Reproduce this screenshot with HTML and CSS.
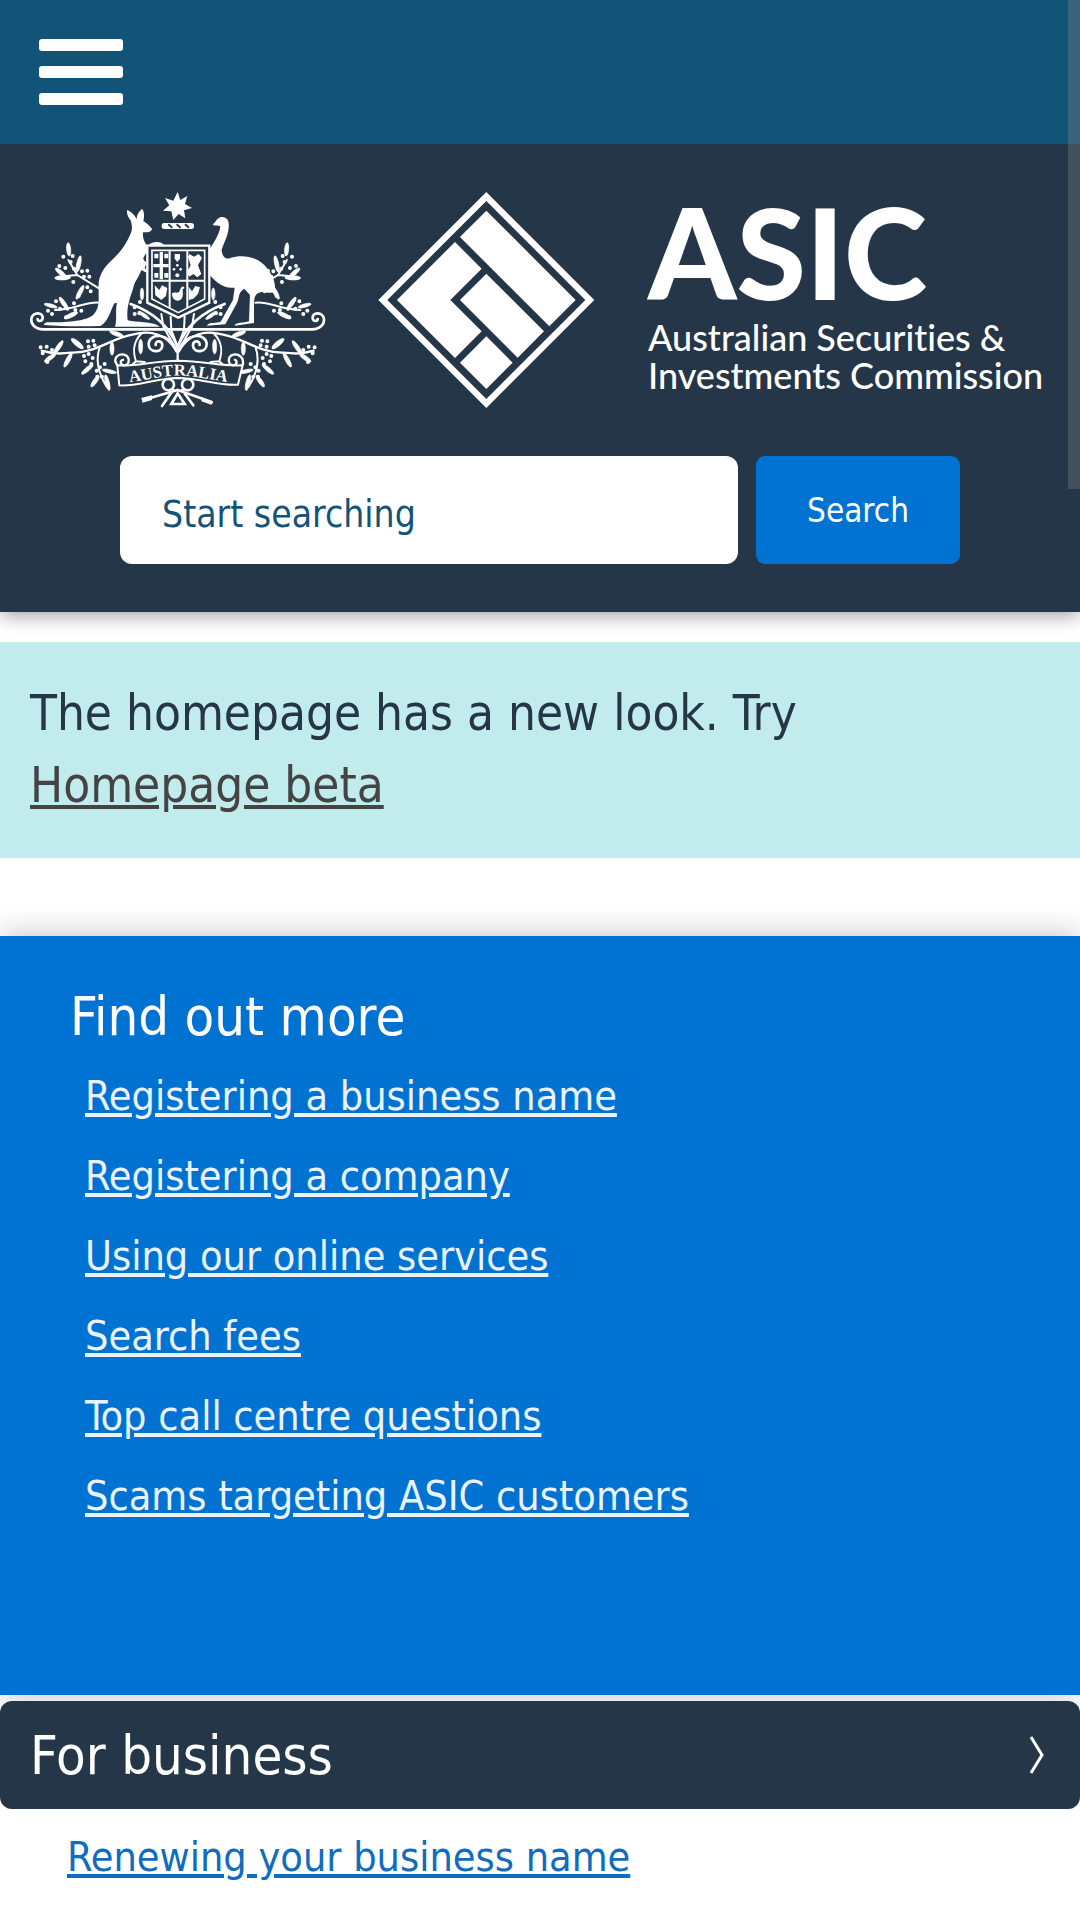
FILE: index.html
```html
<!DOCTYPE html>
<html lang="en">
<head>
    <meta charset="UTF-8">
    <meta name="viewport" content="width=device-width, initial-scale=1.0">
    <title>ASIC Home</title>
    <link rel="stylesheet" href="styles.css">
</head>
<body>

    <nav class="topbar">
        <button type="button" class="menu-button" aria-label="Menu">
            <span></span>
            <span></span>
            <span></span>
        </button>
    </nav>

    <header class="header">
        <a href="#" class="logo" aria-label="ASIC home">
            <svg viewBox="0 0 1020 216" fill="#fff">
                <defs>
                    <!-- one half of the wattle and scroll work, mirrored for the other side -->
                    <g id="half">
                        <g fill="none" stroke="#fff" stroke-width="6" stroke-linecap="round">
                            <path stroke-width="8" d="M533 508H130C105 508 92 492 94 477C97 455 130 455 128 475C126 486 112 485 113 477"/>
                            <path stroke-width="8" d="M533 560C510 505 470 460 392 432"/>
                            <path d="M300 428C260 422 225 450 165 450"/>
                            <path d="M298 386L232 345M232 345L205 300M232 345L175 350"/>
                            <path stroke-width="7" d="M530 575C500 520 450 510 400 523C330 535 290 580 215 578C180 582 160 582 125 572"/>
                            <path stroke-width="8" d="M528 570C505 515 450 520 446 550C444 578 485 582 487 557C487 540 466 540 467 555"/>
                            <path d="M300 560C285 600 295 640 320 680"/>
                            <path d="M425 520C395 550 400 580 408 604L392 618M408 604L434 606"/>
                            <path d="M484 462L490 500L530 570M512 470L514 510L533 560"/>
                        </g>
                        <g stroke="#fff" stroke-width="2">
                            <ellipse cx="206" cy="268" rx="6" ry="20" transform="rotate(-5 206 268)"/>
                            <ellipse cx="236" cy="312" rx="6" ry="25" transform="rotate(12 236 312)"/>
                            <ellipse cx="182" cy="338" rx="6" ry="20" transform="rotate(-50 182 338)"/>
                            <ellipse cx="186" cy="354" rx="22" ry="6"/>
                            <ellipse cx="240" cy="397" rx="6" ry="23" transform="rotate(28 240 397)"/>
                            <ellipse cx="152" cy="437" rx="20" ry="5" transform="rotate(15 152 437)"/>
                            <ellipse cx="191" cy="430" rx="6" ry="22" transform="rotate(-35 191 430)"/>
                            <ellipse cx="213" cy="466" rx="22" ry="6" transform="rotate(-25 213 466)"/>
                            <ellipse cx="426" cy="402" rx="5" ry="18"/>
                            <ellipse cx="432" cy="466" rx="20" ry="5" transform="rotate(35 432 466)"/>
                            <ellipse cx="175" cy="562" rx="6" ry="24" transform="rotate(35 175 562)"/>
                            <ellipse cx="150" cy="594" rx="20" ry="6" transform="rotate(-35 150 594)"/>
                            <ellipse cx="232" cy="551" rx="23" ry="7" transform="rotate(40 232 551)"/>
                            <ellipse cx="204" cy="600" rx="6" ry="24" transform="rotate(28 204 600)"/>
                            <ellipse cx="336" cy="566" rx="6" ry="20"/>
                            <ellipse cx="350" cy="522" rx="22" ry="6" transform="rotate(20 350 522)"/>
                            <ellipse cx="422" cy="560" rx="6" ry="22"/>
                            <ellipse cx="262" cy="628" rx="22" ry="6" transform="rotate(-40 262 628)"/>
                            <ellipse cx="285" cy="664" rx="20" ry="6" transform="rotate(-55 285 664)"/>
                            <ellipse cx="322" cy="668" rx="6" ry="24" transform="rotate(-14 322 668)"/>
                            <ellipse cx="328" cy="634" rx="22" ry="5" transform="rotate(12 328 634)"/>
                        </g>
                        <!-- berries -->
                        <path fill="none" stroke="#fff" stroke-width="12" stroke-linecap="round" d="M190 290h0M218 288h0M212 306h0M178 318h0M196 324h0M222 326h0M206 352h0M220 366h0M246 334h0M262 332h0M252 350h0M268 350h0M236 408h0M262 382h0M272 394h0M144 452h0M168 424h0M180 446h0M156 462h0M202 446h0M222 430h0M198 472h0M226 450h0M244 452h0M404 442h0M420 426h0M404 462h0M418 460h0M122 562h0M140 560h0M128 580h0M156 570h0M142 606h0M264 544h0M280 542h0M266 560h0M284 556h0M252 588h0M266 582h0M278 594h0M256 604h0M274 612h0M290 632h0M300 622h0M306 650h0M292 650h0M314 612h0"/>
                    </g>
                </defs>

                <!-- coat of arms -->
                <g transform="translate(-30 -32) scale(.3333)">
                    <path d="M533 96L541 120L562 108L555 132L576 144L552 151L556 175L536 162L520 180L514 154L489 152L508 136L495 114L520 122Z"/>
                    <rect x="485" y="189" width="97" height="18" rx="8"/>
                    <path stroke="#243647" stroke-width="6" d="M505 193l12 10M530 193l12 10M555 193l12 10"/>
                    <use href="#half"/>
                    <use href="#half" transform="matrix(-1 0 0 1 1066 0)"/>
                    <!-- kangaroo -->
                    <path d="M381 150C395 155 406 168 410 178C410 165 418 152 427 147C434 158 433 172 430 183C441 189 448 198 456 206C455 217 440 217 429 217C427 235 434 247 441 257C455 244 484 241 492 256C475 265 453 263 442 273L432 290C427 297 432 302 440 307L434 325L448 333L436 337L424 330C418 350 405 363 401 379C397 400 377 435 383 481C410 489 455 482 480 500L345 500C352 478 345 455 351 429L343 430C330 455 327 482 302 498C250 499 190 500 132 495C130 486 143 486 165 487C216 486 266 481 282 462C301 440 295 414 296 390C291 340 322 313 345 291C370 267 386 238 395 212C397 201 395 190 392 181C385 174 380 162 381 150Z"/>
                    <!-- emu -->
                    <path d="M638 193C648 188 650 171 666 171C684 172 688 184 686 204C684 230 667 257 665 272C668 290 676 300 691 294C730 282 777 292 800 323C820 349 829 371 824 396C805 403 793 390 775 399C760 407 763 425 762 440L762 489L704 497C706 486 731 490 747 484L750 405L733 386C710 400 722 415 706 438L676 493L620 497C629 484 650 491 662 485L699 420L704 383C666 387 645 361 628 344L627 270C641 250 660 220 661 199C653 196 645 200 638 193Z"/>
                    <!-- shield -->
                    <path fill="#243647" stroke="#fff" stroke-width="7" d="M442 257H628V428L535 473L442 428Z"/>
                    <path fill="#243647" stroke="#fff" stroke-width="5" d="M456 271H614V417L535 458L456 417Z"/>
                    <path fill="none" stroke="#fff" stroke-width="6" d="M456 362H614M509 272V445M562 272V445"/>
                    <path fill="none" stroke="#fff" stroke-width="10" d="M484 276V358M460 317H506"/>
                    <path d="M463 281h12v14h-12zM493 281h12v14h-12zM463 339h12v14h-12zM493 339h12v14h-12zM524 282h16v14l-8 10l-8-10zM568 282l14 8l14-8l10 12l-12 22l10 26l-12 10l-12-10l-12 8l-8-12l12-22l-8-26z"/>
                    <circle cx="532" cy="316" r="4"/><circle cx="522" cy="328" r="4"/><circle cx="542" cy="328" r="4"/><circle cx="532" cy="346" r="6"/>
                    <path d="M464 376l14 14l8-14l16 8l-4 24l-14 12l-18-14zM516 400c10-6 20 4 24-10c4-12 10-14 14-6l-6 4c2 20 0 34-14 34s-18-12-18-22zM566 380l10 14l10-16l14 4l-6 20l-14 14l-14 4z"/>
                    <!-- bow under the scroll -->
                    <g fill="none" stroke="#fff" stroke-width="8" stroke-linecap="round">
                        <path d="M533 690L430 720M533 690L635 726M520 690L486 738M546 690L580 736"/>
                        <circle cx="505" cy="674" r="17"/>
                        <circle cx="563" cy="674" r="17"/>
                        <path d="M533 700L514 732H554Z"/>
                    </g>
                    <path d="M424 714l32-8v14l-28 8zM606 712l34 14l-6 8l-30-10z"/>
                    <path fill="none" stroke="#fff" stroke-width="7" d="M533 560V602"/>
                    <!-- scroll with the name -->
                    <path fill="#243647" stroke="#fff" stroke-width="6" d="M352 616C410 620 455 603 535 602C615 603 660 620 728 616L714 674C650 678 610 655 535 654C460 655 415 680 358 676Z"/>
                    <g fill="none" stroke="#fff" stroke-width="7">
                        <path d="M352 616C336 594 356 580 372 584C392 590 390 616 372 616C358 614 360 598 372 600"/>
                        <path d="M728 616C734 592 714 580 700 584C680 590 684 616 700 616C714 614 712 598 702 600"/>
                    </g>
                    <path id="scroll" fill="none" d="M360 670C430 664 480 647 535 647C590 647 640 662 710 670"/>
                    <text class="scroll-text" text-anchor="middle"><textPath href="#scroll" startOffset="50%">AUSTRALIA</textPath></text>
                </g>

                <!-- diamond -->
                <g transform="translate(330 -22) scale(.3333)">
                    <path fill-rule="evenodd" d="M379 66L703 390L379 714L55 390ZM379 93L82 390L379 687L676 390Z"/>
                    <path d="M379 122L647 390L568 469L300 201ZM285 216L365 296L271 390L365 484L285 564L111 390ZM379 311L552 484L473 563L300 390ZM379 499L458 578L379 657L300 578Z"/>
                </g>

                <text class="logo-name" x="618" y="108">ASIC</text>
                <text class="logo-text" x="618" y="159">Australian Securities &amp;</text>
                <text class="logo-text" x="618" y="197">Investments Commission</text>
            </svg>
        </a>

        <form class="search">
            <input type="text" id="search" name="search" placeholder="Start searching" aria-label="Start searching">
            <button type="submit">Search</button>
        </form>
    </header>

    <main>
        <p class="notice">The homepage has a new look. Try <br><a href="#">Homepage beta</a></p>

        <section class="find-out">
            <h2>Find out more</h2>
            <ul>
                <li><a href="#">Registering a business name</a></li>
                <li><a href="#">Registering a company</a></li>
                <li><a href="#">Using our online services</a></li>
                <li><a href="#">Search fees</a></li>
                <li><a href="#">Top call centre questions</a></li>
                <li><a href="#">Scams targeting ASIC customers</a></li>
            </ul>
        </section>

        <section class="business">
            <button type="button" class="panel-button">
                For business
                <svg viewBox="0 0 14 38" width="14" height="38" fill="none" stroke="#fff" stroke-width="3">
                    <path d="M1 1L12 19L1 37"/>
                </svg>
            </button>
            <ul>
                <li><a href="#">Renewing your business name</a></li>
            </ul>
        </section>
    </main>

    <div class="scroll-thumb"></div>

</body>
</html>
```
FILE: styles.css
```css
* {
    box-sizing: border-box;
}
body {
    position: relative;
    margin: 0;
    background-color: #fff;
    color: #243647;
    font-family: Tahoma, "DejaVu Sans Condensed", "DejaVu Sans", sans-serif;
    overflow-x: hidden;
}
ul {
    list-style: none;
    margin: 0;
    padding: 0;
}
button, input {
    font-family: inherit;
    border: none;
}
.topbar {
    position: relative;
    height: 144px;
    padding: 39px;
    background-color: #125478;
}
.menu-button {
    display: flex;
    flex-direction: column;
    gap: 15px;
    width: 84px;
    padding: 0;
    background: none;
    cursor: pointer;
}
.menu-button span {
    height: 12px;
    border-radius: 3px;
    background-color: #fff;
}
.header {
    padding: 48px 30px;
    background-color: #243647;
    box-shadow: 0 3px 18px rgba(0, 0, 0, 0.4);
}
.logo, .logo svg {
    display: block;
    overflow: visible;
}
.logo-name {
    font: 900 126px Lato, sans-serif;
}
.logo-text {
    font: 500 36px Lato, sans-serif;
    font-variant-ligatures: none;
}
.scroll-text {
    font: bold 50px "Liberation Serif", serif;
}
.search {
    display: flex;
    gap: 18px;
    margin: 48px 90px 0;
}
.search input {
    flex: 1;
    min-width: 0;
    height: 108px;
    padding: 8px 42px 0;
    border-radius: 12px;
    background-color: #fff;
    color: #125478;
    font-size: 37px;
}
.search input::placeholder {
    color: #125478;
    opacity: 1;
}
.search button {
    width: 204px;
    border-radius: 9px;
    background-color: #0072d2;
    color: #fff;
    font-size: 33px;
    cursor: pointer;
}
.notice {
    margin: 30px 0 78px;
    padding: 36px 30px;
    background-color: #c2ebed;
    font-size: 49px;
    line-height: 72px;
}
.notice a {
    color: #444;
}
.find-out {
    height: 759px;
    padding: 42px 70px;
    background-color: #0072d2;
    color: #fff;
    box-shadow: 0 0 30px rgba(0, 0, 0, 0.25);
}
.find-out h2 {
    margin: 0;
    font-size: 54px;
    font-weight: normal;
    line-height: 78px;
}
.find-out li, .business li {
    padding-left: 15px;
    font-size: 41px;
    line-height: 80px;
}
.find-out a {
    color: #ebf3fa;
}
.business {
    padding-top: 6px;
}
.panel-button {
    display: flex;
    align-items: center;
    justify-content: space-between;
    width: 100%;
    height: 108px;
    padding: 0 36px 0 30px;
    border-radius: 12px;
    background-color: #243647;
    color: #fff;
    font-size: 54px;
    cursor: pointer;
}
.business ul {
    padding: 8px 52px;
}
.business a {
    color: #0f6cbf;
}
.scroll-thumb {
    position: absolute;
    top: 0;
    right: 0;
    width: 12px;
    height: 489px;
    background-color: rgba(128, 128, 128, 0.35);
}
```
